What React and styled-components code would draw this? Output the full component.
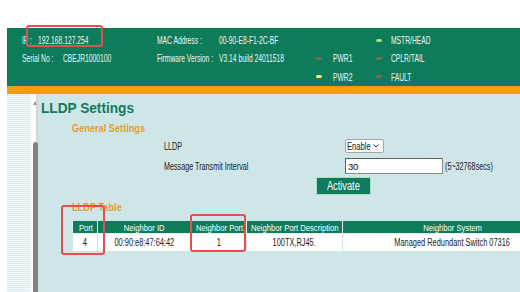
import React from 'react';
import styled, { createGlobalStyle } from 'styled-components';

const GREEN = '#0e7b5b';
const ORANGE = '#f59a14';
const PANEL = '#cfe6e9';
const FONT = '"Liberation Sans", Arial, sans-serif';

const GlobalStyle = createGlobalStyle`
  body {
    margin: 0;
    background: #fff;
    font-family: ${FONT};
  }
`;

// the UI uses a condensed face; squeeze the regular one to match
const Narrow = styled.span`
  display: inline-block;
  white-space: nowrap;
  transform: scaleX(${({ $s }) => $s || 0.72});
  transform-origin: ${({ $o }) => $o || 'left'} center;
  margin-left: ${({ $gap }) => $gap || 0}px;
`;

const Page = styled.div`
  position: relative;
  width: 520px;
  height: 292px;
  overflow: hidden;
  padding-top: 28px;
  box-sizing: border-box;
`;

const Frame = styled.div`
  margin-left: 7px;
  height: 100%;
  display: flex;
  flex-direction: column;
`;

const Header = styled.div`
  height: 58px;
  flex: none;
  box-sizing: border-box;
  padding: 3px 0 0 15px;
  background: ${GREEN};
  display: grid;
  grid-template-columns: 135px 62px 97px 17px 43px 15px 1fr;
  grid-template-rows: repeat(3, 18.3px);
  align-items: center;
  color: #eef6f2;
  font-size: 10.5px;
  white-space: nowrap;
`;

const Led = styled.span`
  display: block;
  width: 6px;
  height: 3px;
  border-radius: 2px;
  background: ${({ $color }) => $color};
`;

const OrangeBar = styled.div`
  height: 8px;
  flex: none;
  background: ${ORANGE};
`;

const Body = styled.div`
  flex: 1;
  display: flex;
  min-height: 0;
  background: #fff;
`;

const Stripes = styled.div`
  width: 23px;
  flex: none;
  background: linear-gradient(#f4f9fb 1px, transparent 1px) 0 0 / 100% 2px, #dcebf0;
`;

const ScrollTrack = styled.div`
  width: 8px;
  flex: none;
  display: flex;
  flex-direction: column;
  align-items: flex-start;
  padding: 7px 0 0 3px;
  box-sizing: border-box;
  background: #fff;
  border-right: 2px solid #d6d6d6;
`;

const UpArrow = styled.span`
  width: 0;
  height: 0;
  border-left: 2.5px solid transparent;
  border-right: 2.5px solid transparent;
  border-bottom: 4px solid #9a9a9a;
`;

const Thumb = styled.span`
  width: 5px;
  flex: 1;
  margin-top: 37px;
  border-radius: 3px 3px 0 0;
  background: #828282;
`;

const Content = styled.div`
  flex: 1;
  min-width: 0;
  overflow: hidden;
  background: ${PANEL};
  padding-left: 3px;
  display: flex;
  flex-direction: column;
  align-items: flex-start;
`;

const Title = styled.h1`
  margin: 4px 0 0;
  font-size: 15.5px;
  line-height: 20px;
  font-weight: bold;
  color: #137a5b;
`;

const Section = styled.h2`
  margin: ${({ $top }) => $top}px 0 0 31px;
  font-size: 11.5px;
  line-height: 14px;
  font-weight: bold;
  color: #e79c2c;
`;

const FormGrid = styled.div`
  margin: 4px 0 0 123px;
  display: grid;
  grid-template-columns: 181px auto;
  row-gap: 5px;
  align-items: center;
  font-size: 10px;
  color: #1a1a1a;
`;

const FieldRow = styled.div`
  display: flex;
  align-items: center;
  gap: 2px;
`;

const Select = styled.div`
  height: 14px;
  width: 39px;
  box-sizing: border-box;
  display: flex;
  align-items: center;
  padding: 0 4px 0 1px;
  background: #fff;
  border: 1px solid #a5a5a5;
  border-radius: 2px;
  font-size: 10px;
  overflow: hidden;
`;

const SelectText = styled(Narrow)`
  flex: 1 1 0;
  min-width: 0;
  width: 0;
`;

const Input = styled.input`
  width: 98px;
  height: 16px;
  box-sizing: border-box;
  padding: 0 2px;
  border: 1px solid #8a8a8a;
  border-top-color: #5f5f5f;
  border-left-color: #5f5f5f;
  background: #fff;
  font: 9.5px ${FONT};
  letter-spacing: -0.4px;
  color: #111;
`;

const Button = styled.button`
  margin: 3px 0 0 275px;
  width: 55px;
  height: 18px;
  padding: 0;
  background: ${GREEN};
  color: #fff;
  border: 1px solid #a9dcc9;
  font: 12px ${FONT};
  white-space: nowrap;
  overflow: hidden;
`;

const Table = styled.table`
  margin: 6px 0 0 31px;
  border-collapse: collapse;
  table-layout: fixed;
  width: 490px;
  flex: none;
`;

const Th = styled.th`
  width: ${({ $w }) => $w}px;
  height: 13px;
  padding: 0 4px;
  box-sizing: border-box;
  background: ${GREEN};
  color: #fff;
  font-size: 9.8px;
  font-weight: normal;
  text-align: center;
  white-space: nowrap;
  overflow: hidden;
  border: 1px solid #e4f2ef;
  border-top-color: ${PANEL};
`;

const Td = styled.td`
  height: 17px;
  padding: 0 3px;
  background: #fff;
  color: #222;
  font-size: 10px;
  text-align: center;
  white-space: nowrap;
  overflow: hidden;
  border: 1px solid ${PANEL};
`;

const Mark = styled.div`
  position: absolute;
  left: ${({ $x }) => $x}px;
  top: ${({ $y }) => $y}px;
  width: ${({ $w }) => $w}px;
  height: ${({ $h }) => $h}px;
  box-sizing: border-box;
  border: 2px solid #e4504e;
  border-radius: 3px;
`;

const Chevron = () => (
  <svg width="6" height="4" viewBox="0 0 6 4">
    <polyline points="0.5,0.5 3,3 5.5,0.5" fill="none" stroke="#333" strokeWidth="1" />
  </svg>
);

// origin "left" where the label is wider than its cell before squeezing
const columns = [
  { label: 'Port', w: 25, o: 'center' },
  { label: 'Neighbor ID', w: 94, o: 'center' },
  { label: 'Neighbor Port', w: 55, o: 'left' },
  { label: 'Neighbor Port Description', w: 96, o: 'left' },
  { label: 'Neighbor System', w: 220, o: 'center' },
];

const row = ['4', '00:90:e8:47:64:42', '1', '100TX,RJ45.', 'Managed Redundant Switch 07316'];

const H = ({ children, gap }) => (
  <Narrow $s={0.64} $gap={gap}>{children}</Narrow>
);

export default function App() {
  return (
    <>
      <GlobalStyle />
      <Page>
        <Frame>
          <Header>
            <span><H>IP :</H><H gap={0}>192.168.127.254</H></span>
            <H>MAC Address :</H>
            <H>00-90-E8-F1-2C-BF</H>
            <span />
            <span />
            <Led $color="#a7e07c" />
            <H>MSTR/HEAD</H>

            <span><H>Serial No :</H><H gap={-8}>CBEJR1000100</H></span>
            <H>Firmware Version :</H>
            <H>V3.14 build 24011518</H>
            <Led $color="#7c6a5c" />
            <H>PWR1</H>
            <Led $color="#7c6a5c" />
            <H>CPLR/TAIL</H>

            <span />
            <span />
            <span />
            <Led $color="#eef06a" />
            <H>PWR2</H>
            <Led $color="#7c6a5c" />
            <H>FAULT</H>
          </Header>
          <OrangeBar />
          <Body>
            <Stripes />
            <ScrollTrack>
              <UpArrow />
              <Thumb />
            </ScrollTrack>
            <Content>
              <Title><Narrow $s={0.88}>LLDP Settings</Narrow></Title>
              <Section $top={3}><Narrow $s={0.8}>General Settings</Narrow></Section>
              <FormGrid>
                <Narrow>LLDP</Narrow>
                <Select>
                  <SelectText $s={0.76}>Enable</SelectText>
                  <Chevron />
                </Select>
                <Narrow>Message Transmit Interval</Narrow>
                <FieldRow>
                  <Input value="30" readOnly />
                  <Narrow>(5~32768secs)</Narrow>
                </FieldRow>
              </FormGrid>
              <Button><Narrow $s={0.77} $o="center">Activate</Narrow></Button>
              <Section $top={5}><Narrow $s={0.8}>LLDP Table</Narrow></Section>
              <Table>
                <thead>
                  <tr>
                    {columns.map((c) => (
                      <Th key={c.label} $w={c.w}>
                        <Narrow $s={0.78} $o={c.o}>{c.label}</Narrow>
                      </Th>
                    ))}
                  </tr>
                </thead>
                <tbody>
                  <tr>
                    {row.map((v, i) => (
                      <Td key={i}>
                        <Narrow $s={0.74} $o="center">{v}</Narrow>
                      </Td>
                    ))}
                  </tr>
                </tbody>
              </Table>
            </Content>
          </Body>
        </Frame>
        <Mark $x={26} $y={25} $w={77} $h={22} />
        <Mark $x={61} $y={205} $w={44} $h={50} />
        <Mark $x={190} $y={214} $w={56} $h={38} />
      </Page>
    </>
  );
}
